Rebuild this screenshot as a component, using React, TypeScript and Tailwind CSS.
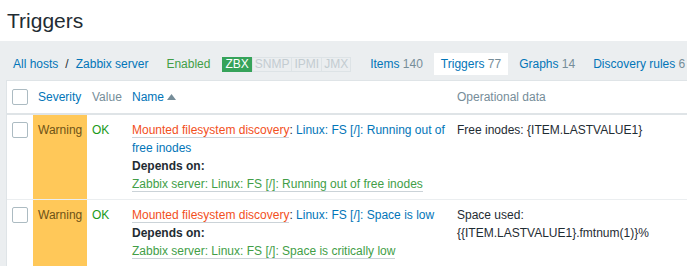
import React from "react";

const blue = "text-[#0275b8]";

function Checkbox() {
  return <span className="block w-[16px] h-[16px] rounded-[2px] border border-[#acbbc2] bg-white" />;
}

function Tab({ label, count, active }: { label: string; count: number; active?: boolean }) {
  return (
    <span
      className={`h-[22px] leading-[22px] px-[7px] ml-[4px] ${active ? "bg-white" : ""}`}
    >
      <span className={blue}>{label}</span>{" "}
      <span className="text-[#768d99]">{count}</span>
    </span>
  );
}

function AltLink({ children, color }: { children: React.ReactNode; color: string }) {
  return <span className={`${color} border-b border-[#cbd3d8]`}>{children}</span>;
}

interface Row {
  name: string;
  depends: string;
  opdata: string[];
}

const rows: Row[] = [
  {
    name: "Linux: FS [/]: Running out of free inodes",
    depends: "Zabbix server: Linux: FS [/]: Running out of free inodes",
    opdata: ["Free inodes: {ITEM.LASTVALUE1}"],
  },
  {
    name: "Linux: FS [/]: Space is low",
    depends: "Zabbix server: Linux: FS [/]: Space is critically low",
    opdata: ["Space used:", "{{ITEM.LASTVALUE1}.fmtnum(1)}%"],
  },
];

export default function App() {
  return (
    <div className="w-[687px] h-[266px] overflow-hidden bg-[#ebeef0] text-[12px] text-[#1f2c33] font-['Liberation_Sans',Arial,sans-serif]">
      {/* Page header */}
      <div className="h-[41px] bg-white pl-[7px]">
        <h1 className="text-[21px] leading-[41px] text-[#1f2c33]">Triggers</h1>
      </div>

      {/* Host navigation */}
      <div className="h-[39px] pt-[12px] pl-[13px] flex items-start whitespace-nowrap">
        <span className="h-[22px] leading-[22px] flex items-center">
          <span className={blue}>All hosts</span>
          <span className="mx-[7px]">/</span>
          <span className={blue}>Zabbix server</span>
        </span>
        <span className="h-[22px] leading-[22px] ml-[18px] text-[#429e47]">Enabled</span>
        <span className="h-[22px] ml-[12px] flex items-center">
          <span className="h-[15px] leading-[13px] px-[2px] border border-[#36a35a] bg-[#36a35a] text-white">ZBX</span>
          <span className="h-[15px] leading-[13px] px-[2px] border border-[#dde3e6] text-[#c3ccd1]">SNMP</span>
          <span className="h-[15px] leading-[13px] px-[2px] border border-[#dde3e6] -ml-px text-[#c3ccd1]">IPMI</span>
          <span className="h-[15px] leading-[13px] px-[2px] border border-[#dde3e6] -ml-px text-[#c3ccd1]">JMX</span>
        </span>
        <span className="ml-[8px] flex">
          <Tab label="Items" count={140} />
          <Tab label="Triggers" count={77} active />
          <Tab label="Graphs" count={14} />
          <Tab label="Discovery rules" count={6} />
        </span>
      </div>

      {/* Triggers table */}
      <div className="ml-[6px] w-[682px] bg-white border-l border-t border-[#dfe4e7]">
        <table className="w-full border-collapse table-fixed">
          <colgroup>
            <col className="w-[26px]" />
            <col className="w-[54px]" />
            <col className="w-[40px]" />
            <col className="w-[325px]" />
            <col />
          </colgroup>
          <thead>
            <tr className="border-b-2 border-[#dfe4e7] h-[33px]">
              <th className="pl-[5px] align-middle">
                <Checkbox />
              </th>
              <th className={`px-[5px] text-left font-normal ${blue}`}>Severity</th>
              <th className="px-[5px] text-left font-normal text-[#768d99]">Value</th>
              <th className={`px-[5px] text-left font-normal ${blue}`}>
                <span className="inline-flex items-center">
                  Name
                  <svg width="9" height="6" viewBox="0 0 9 6" className="ml-[3px]">
                    <path d="M0 6 L4.5 0 L9 6 Z" fill="#768d99" />
                  </svg>
                </span>
              </th>
              <th className="px-[5px] text-left font-normal text-[#768d99]">Operational data</th>
            </tr>
          </thead>
          <tbody>
            {rows.map((r, i) => (
              <tr key={i} className="border-b border-[#ebeef0] align-top leading-[18px]">
                <td className="pl-[5px] pt-[7px]">
                  <Checkbox />
                </td>
                <td className="px-[5px] py-[6px] bg-[#ffc859] text-[#6e5217]">Warning</td>
                <td className="px-[5px] py-[6px] text-[#1a9a1a]">OK</td>
                <td className="px-[5px] py-[6px]">
                  <div>
                    <AltLink color="text-[#f24f1d]">Mounted filesystem discovery</AltLink>
                    {": "}
                    <span className={blue}>{r.name}</span>
                  </div>
                  <div className="font-bold">Depends on:</div>
                  <div>
                    <AltLink color="text-[#429e47]">{r.depends}</AltLink>
                  </div>
                </td>
                <td className="px-[5px] py-[6px]">
                  {r.opdata.map((l, j) => (
                    <div key={j}>{l}</div>
                  ))}
                </td>
              </tr>
            ))}
          </tbody>
        </table>
      </div>
    </div>
  );
}
